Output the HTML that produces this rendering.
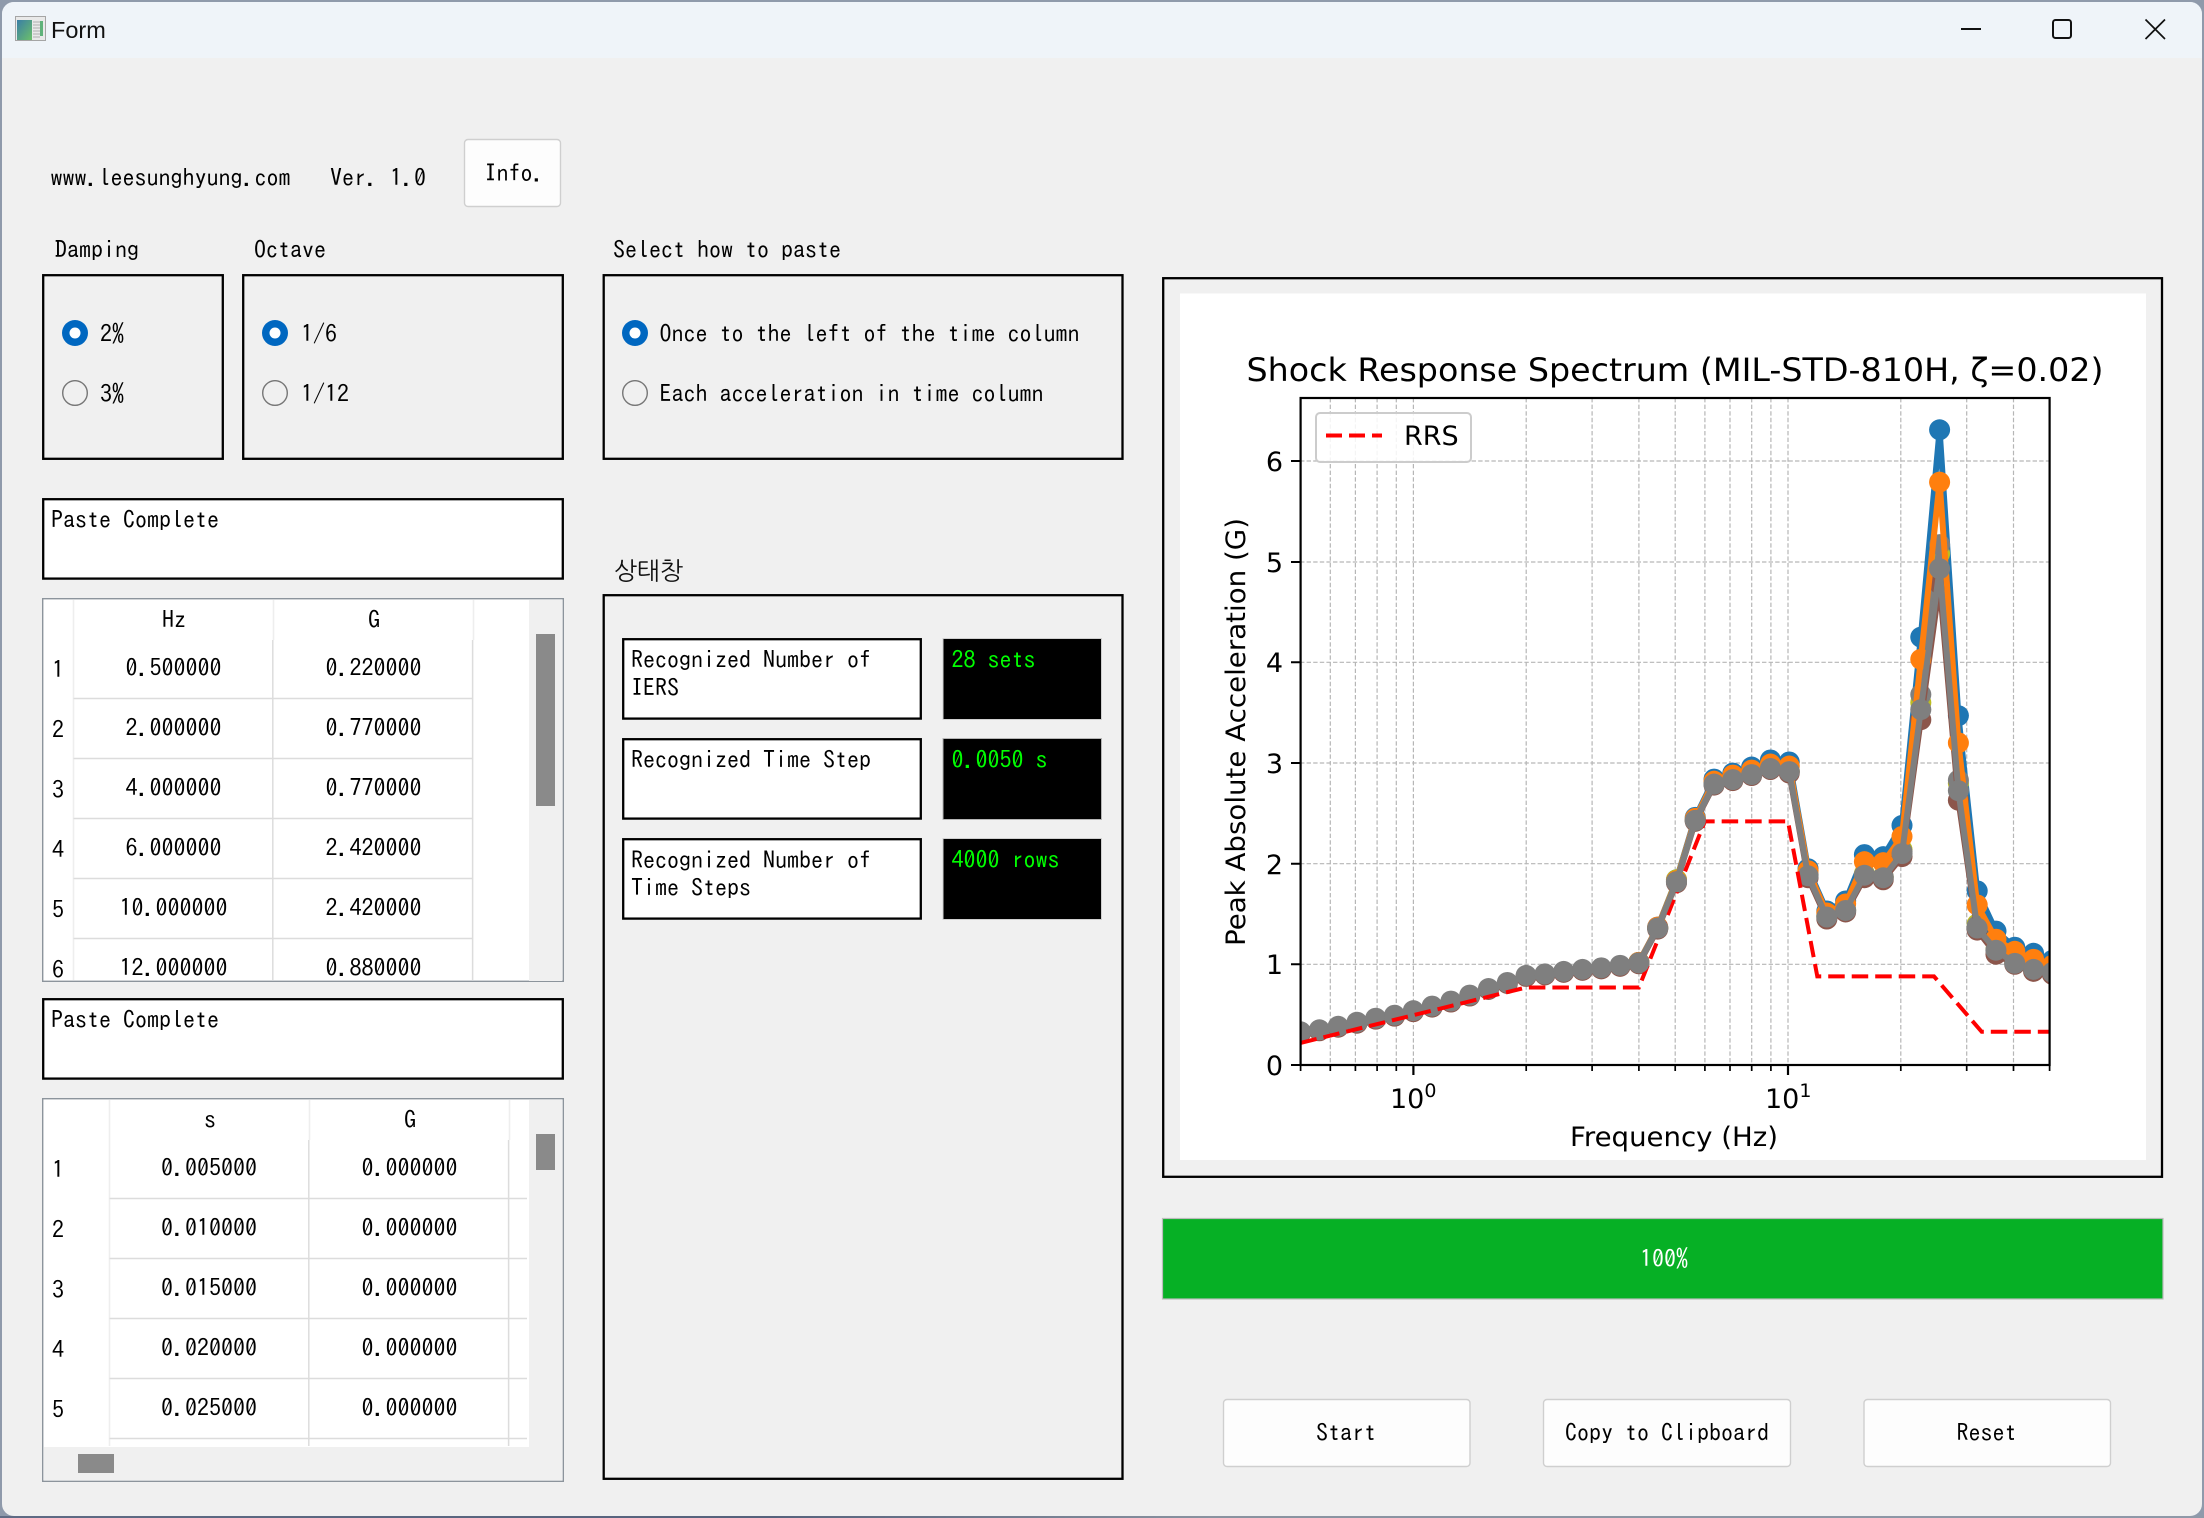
<!DOCTYPE html>
<html lang="en">
<head>
<meta charset="utf-8">
<title>Form</title>
<style>
html,body{margin:0;padding:0;background:#7e8a9b;width:2204px;height:1518px;overflow:hidden}
svg{display:block;position:absolute;left:0;top:0}
.t{font-family:"IPAGothic","NanumGothic","Liberation Mono",monospace;font-size:24px;fill:#000;white-space:pre}
.c{text-anchor:middle}
.g{fill:#00ff00}
.kr{font-family:"NanumGothic","Noto Sans CJK KR",sans-serif;font-size:24.5px;fill:#111}
.box{fill:none;stroke:#000;stroke-width:2.3}
.wb{fill:#fff;stroke:#000;stroke-width:2.3}
.btn{fill:#fdfdfd;stroke:#cfcfcf;stroke-width:1.4}
.tl{stroke:#dcdcdc;stroke-width:1.5}
.hl{stroke:#eeeeee;stroke-width:1.5}
.p{font-family:"DejaVu Sans",sans-serif;font-size:27px;fill:#000}
.grid line{stroke:#b6b6b6;stroke-width:1.2;stroke-dasharray:4.4 2.2}
.s{fill:none;stroke-width:6;stroke-linejoin:round;vector-effect:non-scaling-stroke}
</style>
</head>
<body>
<svg width="2204" height="1518" viewBox="0 0 2204 1518" xmlns="http://www.w3.org/2000/svg">
<defs>
<linearGradient id="edge" x1="0" x2="1" y1="0" y2="0"><stop offset="0" stop-color="#5f6b84"/><stop offset=".35" stop-color="#56627c"/><stop offset=".55" stop-color="#8a93a0"/><stop offset="1" stop-color="#8f99a8"/></linearGradient>
<linearGradient id="ic" x1="0" x2="1" y1="0" y2="1"><stop offset="0" stop-color="#3a7ea6"/><stop offset="1" stop-color="#6cc06a"/></linearGradient>
<clipPath id="ax"><rect x="1300.6" y="398" width="749" height="667"/></clipPath>
<clipPath id="t1"><rect x="44" y="600" width="518" height="381"/></clipPath>
<clipPath id="t2"><rect x="44" y="1100" width="518" height="347"/></clipPath>
<clipPath id="win"><rect x="2" y="2" width="2200" height="1514" rx="12"/></clipPath>
<marker id="mb" markerUnits="userSpaceOnUse" overflow="visible" markerWidth="2" markerHeight="1"><ellipse rx=".56" ry=".104" fill="#1f77b4"/></marker>
<marker id="mo" markerUnits="userSpaceOnUse" overflow="visible" markerWidth="2" markerHeight="1"><ellipse rx=".56" ry=".104" fill="#ff7f0e"/></marker>
<marker id="my" markerUnits="userSpaceOnUse" overflow="visible" markerWidth="2" markerHeight="1"><ellipse rx=".56" ry=".104" fill="#bcbd22"/></marker>
<marker id="mp" markerUnits="userSpaceOnUse" overflow="visible" markerWidth="2" markerHeight="1"><ellipse rx=".56" ry=".104" fill="#9467bd"/></marker>
<marker id="mr" markerUnits="userSpaceOnUse" overflow="visible" markerWidth="2" markerHeight="1"><ellipse rx=".56" ry=".104" fill="#8c564b"/></marker>
<marker id="mg" markerUnits="userSpaceOnUse" overflow="visible" markerWidth="2" markerHeight="1"><ellipse rx=".56" ry=".104" fill="#7f7f7f"/></marker>
</defs>

<!-- window frame -->
<rect x="0" y="0" width="2204" height="1518" fill="#8f9aab"/>
<rect x="0" y="1516" width="2204" height="2" fill="url(#edge)"/>
<rect x="2" y="2" width="2200" height="1514" rx="12" fill="#f0f0f0"/>
<g clip-path="url(#win)"><rect x="2" y="2" width="2200" height="56" fill="#eff4f9"/></g>

<!-- title bar -->
<rect x="15.5" y="16.5" width="30" height="24" fill="#e9e9e9" stroke="#a5a5a5"/>
<rect x="17" y="20" width="15" height="20" fill="url(#ic)"/>
<path d="M33 22h7M33 25h7M33 28h7M33 31h7M33 34h7M33 37h7" stroke="#c2c2c2" stroke-width="1.5"/>
<rect x="40" y="21" width="3" height="15" fill="#5fb27a"/>
<text x="51" y="38" font-family="Liberation Sans,sans-serif" font-size="23.5" fill="#111">Form</text>
<path d="M1961 29h20" stroke="#111" stroke-width="2"/>
<rect x="2053" y="20" width="18" height="18" rx="2.5" fill="none" stroke="#111" stroke-width="2"/>
<path d="M2145.5 19.5l19.5 19.5M2165 19.5l-19.5 19.5" stroke="#111" stroke-width="1.7"/>

<!-- header row -->
<text class="t" x="50.5" y="186">www.leesunghyung.com</text>
<text class="t" x="330" y="186">Ver. 1.0</text>
<rect class="btn" x="464.5" y="139.5" width="96" height="67" rx="3.5"/>
<text class="t" x="484.5" y="181.5">Info.</text>

<!-- damping / octave -->
<text class="t" x="55" y="258">Damping</text>
<text class="t" x="254" y="258">Octave</text>
<rect class="box" x="43.2" y="275.2" width="179.6" height="183.6"/>
<rect class="box" x="243.2" y="275.2" width="319.6" height="183.6"/>

<circle cx="75" cy="333" r="13" fill="#0067c0"/><circle cx="75" cy="333" r="5.5" fill="#fff"/>
<circle cx="75" cy="393" r="12.3" fill="#f0f0f0" stroke="#767676" stroke-width="1.4"/>
<text class="t" x="100" y="342">2%</text>
<text class="t" x="100" y="402">3%</text>
<circle cx="275" cy="333" r="13" fill="#0067c0"/><circle cx="275" cy="333" r="5.5" fill="#fff"/>
<circle cx="275" cy="393" r="12.3" fill="#f0f0f0" stroke="#767676" stroke-width="1.4"/>
<text class="t" x="301" y="342">1/6</text>
<text class="t" x="301" y="402">1/12</text>

<!-- select how to paste -->
<text class="t" x="613" y="258">Select how to paste</text>
<rect class="box" x="603.7" y="275.2" width="518.8" height="183.6"/>
<circle cx="635" cy="333" r="13" fill="#0067c0"/><circle cx="635" cy="333" r="5.5" fill="#fff"/>
<circle cx="635" cy="393" r="12.3" fill="#f0f0f0" stroke="#767676" stroke-width="1.4"/>
<text class="t" x="659.5" y="342">Once to the left of the time column</text>
<text class="t" x="659.5" y="402">Each acceleration in time column</text>

<!-- paste 1 -->
<rect class="wb" x="43.2" y="499.2" width="519.6" height="79.4"/>
<text class="t" x="51" y="528">Paste Complete</text>

<!-- table 1 -->
<rect x="42.7" y="598.7" width="520.6" height="382.6" fill="#fff" stroke="#8c949c" stroke-width="1.4"/>
<g clip-path="url(#t1)">
<path class="hl" d="M73.5 600v380M273.5 600v40M473.5 600v40" fill="none"/>
<path class="tl" d="M272.8 640v340M472.6 640v340M73.5 698.5H473M73.5 758.5H473M73.5 818.5H473M73.5 878.5H473M73.5 938.5H473" fill="none"/>
<text class="t c" x="174" y="628">Hz</text><text class="t c" x="374" y="628">G</text>
<text class="t c" x="173.5" y="676">0.500000</text><text class="t c" x="373.5" y="676">0.220000</text>
<text class="t c" x="173.5" y="736">2.000000</text><text class="t c" x="373.5" y="736">0.770000</text>
<text class="t c" x="173.5" y="796">4.000000</text><text class="t c" x="373.5" y="796">0.770000</text>
<text class="t c" x="173.5" y="856">6.000000</text><text class="t c" x="373.5" y="856">2.420000</text>
<text class="t c" x="173.5" y="916">10.000000</text><text class="t c" x="373.5" y="916">2.420000</text>
<text class="t c" x="173.5" y="976">12.000000</text><text class="t c" x="373.5" y="976">0.880000</text>
<text class="t c" x="58" y="678">1</text><text class="t c" x="58" y="738">2</text><text class="t c" x="58" y="798">3</text><text class="t c" x="58" y="858">4</text><text class="t c" x="58" y="918">5</text><text class="t c" x="58" y="978">6</text>
<rect x="529" y="600" width="33" height="381" fill="#f0f0f0"/>
<rect x="536" y="634" width="19" height="172" fill="#8a8a8a"/>
</g>

<!-- paste 2 -->
<rect class="wb" x="43.2" y="999.2" width="519.6" height="79.4"/>
<text class="t" x="51" y="1028">Paste Complete</text>

<!-- table 2 -->
<rect x="42.7" y="1098.7" width="520.6" height="382.6" fill="#fff" stroke="#8c949c" stroke-width="1.4"/>
<g clip-path="url(#t2)">
<path class="hl" d="M109.5 1100v346M309.5 1100v40M509.5 1100v40" fill="none"/>
<path class="tl" d="M308.8 1140v306M508.6 1140v306M109.5 1198.5H527M109.5 1258.5H527M109.5 1318.5H527M109.5 1378.5H527M109.5 1438.5H527" fill="none"/>
<text class="t c" x="210" y="1128">s</text><text class="t c" x="410" y="1128">G</text>
<text class="t c" x="209" y="1176">0.005000</text><text class="t c" x="409.5" y="1176">0.000000</text>
<text class="t c" x="209" y="1236">0.010000</text><text class="t c" x="409.5" y="1236">0.000000</text>
<text class="t c" x="209" y="1296">0.015000</text><text class="t c" x="409.5" y="1296">0.000000</text>
<text class="t c" x="209" y="1356">0.020000</text><text class="t c" x="409.5" y="1356">0.000000</text>
<text class="t c" x="209" y="1416">0.025000</text><text class="t c" x="409.5" y="1416">0.000000</text>
<text class="t c" x="58" y="1178">1</text><text class="t c" x="58" y="1238">2</text><text class="t c" x="58" y="1298">3</text><text class="t c" x="58" y="1358">4</text><text class="t c" x="58" y="1418">5</text>
</g>
<rect x="529" y="1100" width="33" height="380" fill="#f0f0f0"/>
<rect x="44" y="1447" width="518" height="33" fill="#f0f0f0"/>
<rect x="536" y="1134" width="19" height="36" fill="#8a8a8a"/>
<rect x="78" y="1454" width="36" height="19" fill="#8a8a8a"/>

<!-- status -->
<text class="kr" x="614" y="579.5">상태창</text>
<rect class="box" x="603.7" y="595.2" width="518.8" height="883.6"/>
<rect class="wb" x="623.2" y="639.2" width="297.6" height="79.4"/>
<rect class="wb" x="623.2" y="739.2" width="297.6" height="79.4"/>
<rect class="wb" x="623.2" y="839.2" width="297.6" height="79.4"/>
<text class="t" x="631" y="668">Recognized Number of</text>
<text class="t" x="631" y="696">IERS</text>
<text class="t" x="631" y="768">Recognized Time Step</text>
<text class="t" x="631" y="868.5">Recognized Number of</text>
<text class="t" x="631" y="896">Time Steps</text>
<rect x="943" y="638.5" width="158.5" height="81" fill="#000" stroke="#cfcfcf" stroke-width="1"/>
<rect x="943" y="738.5" width="158.5" height="81" fill="#000" stroke="#b5b5b5" stroke-width="1"/>
<rect x="943" y="838.5" width="158.5" height="81" fill="#000" stroke="#cfcfcf" stroke-width="1"/>
<text class="t g" x="951.5" y="668">28 sets</text>
<text class="t g" x="951.5" y="768">0.0050 s</text>
<text class="t g" x="951.5" y="868">4000 rows</text>

<!-- chart frame -->
<rect class="box" x="1163.2" y="278.2" width="998.8" height="898.6"/>
<rect x="1180" y="293.5" width="966" height="866.5" fill="#fff"/>

<!-- grid -->
<g class="grid">
<line x1="1330.3" x2="1330.3" y1="398" y2="1065"/><line x1="1355.4" x2="1355.4" y1="398" y2="1065"/><line x1="1377.1" x2="1377.1" y1="398" y2="1065"/><line x1="1396.3" x2="1396.3" y1="398" y2="1065"/><line x1="1413.4" x2="1413.4" y1="398" y2="1065"/><line x1="1526.2" x2="1526.2" y1="398" y2="1065"/><line x1="1592.1" x2="1592.1" y1="398" y2="1065"/><line x1="1638.9" x2="1638.9" y1="398" y2="1065"/><line x1="1675.2" x2="1675.2" y1="398" y2="1065"/><line x1="1704.9" x2="1704.9" y1="398" y2="1065"/><line x1="1730" x2="1730" y1="398" y2="1065"/><line x1="1751.7" x2="1751.7" y1="398" y2="1065"/><line x1="1770.9" x2="1770.9" y1="398" y2="1065"/><line x1="1788" x2="1788" y1="398" y2="1065"/><line x1="1900.8" x2="1900.8" y1="398" y2="1065"/><line x1="1966.7" x2="1966.7" y1="398" y2="1065"/><line x1="2013.5" x2="2013.5" y1="398" y2="1065"/>
<line x1="1300" x2="2050" y1="461" y2="461"/><line x1="1300" x2="2050" y1="562" y2="562"/><line x1="1300" x2="2050" y1="662.3" y2="662.3"/><line x1="1300" x2="2050" y1="763" y2="763"/><line x1="1300" x2="2050" y1="863.7" y2="863.7"/><line x1="1300" x2="2050" y1="964.3" y2="964.3"/>
</g>

<!-- data -->
<g clip-path="url(#ax)">
<g transform="translate(1300.6,1065) scale(18.794,-100.67)">
<polyline class="s" stroke="#1f77b4" marker-start="url(#mb)" marker-mid="url(#mb)" marker-end="url(#mb)" points="18,1.02 19,1.37 20,1.84 21,2.46 22,2.84 23,2.9 24,2.96 25,3.03 26,3.01 27,1.95 28,1.53 29,1.63 30,2.09 31,2.07 32,2.38 33,4.25 34,6.31 35,3.47 36,1.73 37,1.33 38,1.17 39,1.11 40,1.04"/>
<polyline class="s" stroke="#bcbd22" marker-start="url(#my)" marker-mid="url(#my)" marker-end="url(#my)" points="18,1.02 19,1.36 20,1.84 21,2.43 22,2.8 23,2.84 24,2.89 25,2.95 26,2.92 27,1.89 28,1.48 29,1.54 30,1.9 31,1.87 32,2.14 33,3.6 34,5.08 35,2.8 36,1.4 37,1.15 38,1.02 39,.96 40,.92"/>
<polyline class="s" stroke="#7f7f7f" marker-start="url(#mg)" marker-mid="url(#mg)" marker-end="url(#mg)" points="18,1.02 19,1.36 20,1.82 21,2.43 22,2.8 23,2.84 24,2.89 25,2.95 26,2.92 27,1.89 28,1.48 29,1.54 30,1.89 31,1.87 32,2.12 33,3.68 34,5.17 35,2.83 36,1.38 37,1.14 38,1.01 39,.95 40,.92"/>
<polyline class="s" stroke="#8c564b" marker-start="url(#mr)" marker-mid="url(#mr)" marker-end="url(#mr)" points="0,.32 1,.34 2,.375 3,.415 4,.455 5,.485 6,.53 7,.575 8,.625 9,.685 10,.75 11,.81 12,.88 13,.895 14,.92 15,.94 16,.955 17,.98 18,1.005 19,1.35 20,1.81 21,2.42 22,2.78 23,2.825 24,2.875 25,2.935 26,2.9 27,1.86 28,1.45 29,1.52 30,1.86 31,1.84 32,2.07 33,3.43 34,4.78 35,2.63 36,1.34 37,1.1 38,1 39,.93 40,.9"/>
<polyline class="s" stroke="#ff7f0e" marker-start="url(#mo)" marker-mid="url(#mo)" marker-end="url(#mo)" points="18,1.02 19,1.37 20,1.83 21,2.45 22,2.82 23,2.88 24,2.93 25,2.99 26,2.97 27,1.93 28,1.51 29,1.6 30,2.02 31,2.01 32,2.27 33,4.03 34,5.79 35,3.2 36,1.59 37,1.25 38,1.13 39,1.05 40,.99"/>
<polyline class="s" stroke="#7f7f7f" marker-start="url(#mg)" marker-mid="url(#mg)" marker-end="url(#mg)" points="0,.33 1,.35 2,.385 3,.425 4,.465 5,.495 6,.54 7,.585 8,.635 9,.695 10,.76 11,.82 12,.89 13,.905 14,.93 15,.95 16,.965 17,.99 18,1.015 19,1.36 20,1.82 21,2.43 22,2.79 23,2.835 24,2.885 25,2.945 26,2.915 27,1.88 28,1.47 29,1.535 30,1.885 31,1.86 32,2.1 33,3.53 34,4.93 35,2.725 36,1.36 37,1.14 38,1.01 39,.95 40,.92"/>
</g>
<polyline fill="none" stroke="#ff0000" stroke-width="4" stroke-dasharray="16.5 7" stroke-linejoin="miter" points="1300.6,1042.9 1526.1,987.5 1638.9,987.5 1704.9,821.4 1788,821.4 1817.3,976.4 1934,976.4 1981.7,1031.8 2050,1031.8"/>
<g transform="translate(1300.6,1065) scale(18.794,-100.67)">
<polyline class="s" stroke="#7f7f7f" marker-start="url(#mg)" marker-mid="url(#mg)" marker-end="url(#mg)" points="18,1.015 19,1.36 20,1.82 21,2.43 22,2.79"/>
</g>
</g>

<!-- axes -->
<rect x="1300.6" y="398" width="749" height="667" fill="none" stroke="#000" stroke-width="2.2"/>
<path d="M1413.4 1065v10M1788 1065v10" stroke="#000" stroke-width="2.2"/>
<path d="M1300.6 1065v6M1330.3 1065v6M1355.4 1065v6M1377.1 1065v6M1396.3 1065v6M1526.2 1065v6M1592.1 1065v6M1638.9 1065v6M1675.2 1065v6M1704.9 1065v6M1730 1065v6M1751.7 1065v6M1770.9 1065v6M1900.8 1065v6M1966.7 1065v6M2013.5 1065v6M2049.6 1065v6" stroke="#000" stroke-width="1.7"/>
<path d="M1291 461h9M1291 562h9M1291 662.3h9M1291 763h9M1291 863.7h9M1291 964.3h9M1291 1065h9" stroke="#000" stroke-width="2"/>

<!-- chart text -->
<text class="p" x="1246.5" y="381" style="font-size:32.4px" textLength="857" lengthAdjust="spacingAndGlyphs">Shock Response Spectrum (MIL-STD-810H, ζ=0.02)</text>
<text class="p" x="1283" y="471" text-anchor="end">6</text>
<text class="p" x="1283" y="572" text-anchor="end">5</text>
<text class="p" x="1283" y="672" text-anchor="end">4</text>
<text class="p" x="1283" y="773" text-anchor="end">3</text>
<text class="p" x="1283" y="874" text-anchor="end">2</text>
<text class="p" x="1283" y="974" text-anchor="end">1</text>
<text class="p" x="1283" y="1075" text-anchor="end">0</text>
<text class="p" x="1390" y="1108">10<tspan dy="-11" style="font-size:19px">0</tspan></text>
<text class="p" x="1765" y="1108">10<tspan dy="-11" style="font-size:19px">1</tspan></text>
<text class="p" x="1570" y="1146" textLength="208" lengthAdjust="spacingAndGlyphs">Frequency (Hz)</text>
<text class="p" transform="translate(1245,946) rotate(-90)" x="0" y="0" textLength="428" lengthAdjust="spacingAndGlyphs">Peak Absolute Acceleration (G)</text>

<!-- legend -->
<rect x="1316" y="413" width="155" height="49" rx="4" fill="#fff" fill-opacity=".85" stroke="#ccc" stroke-width="2"/>
<path d="M1326 435.5h56" stroke="#f00" stroke-width="4" stroke-dasharray="16 7" fill="none"/>
<text class="p" x="1404" y="445">RRS</text>

<!-- progress -->
<rect x="1162.5" y="1218.5" width="1000.5" height="80.5" fill="#06b025" stroke="#bcbcbc" stroke-width="1.2"/>
<text class="t c" x="1664" y="1267" style="fill:#fff">100%</text>

<!-- buttons -->
<rect class="btn" x="1223.5" y="1399.5" width="246.5" height="67" rx="3.5"/>
<rect class="btn" x="1543.5" y="1399.5" width="247" height="67" rx="3.5"/>
<rect class="btn" x="1864" y="1399.5" width="246.5" height="67" rx="3.5"/>
<text class="t c" x="1346" y="1441">Start</text>
<text class="t c" x="1667" y="1441">Copy to Clipboard</text>
<text class="t c" x="1986.5" y="1441">Reset</text>
</svg>
</body>
</html>
